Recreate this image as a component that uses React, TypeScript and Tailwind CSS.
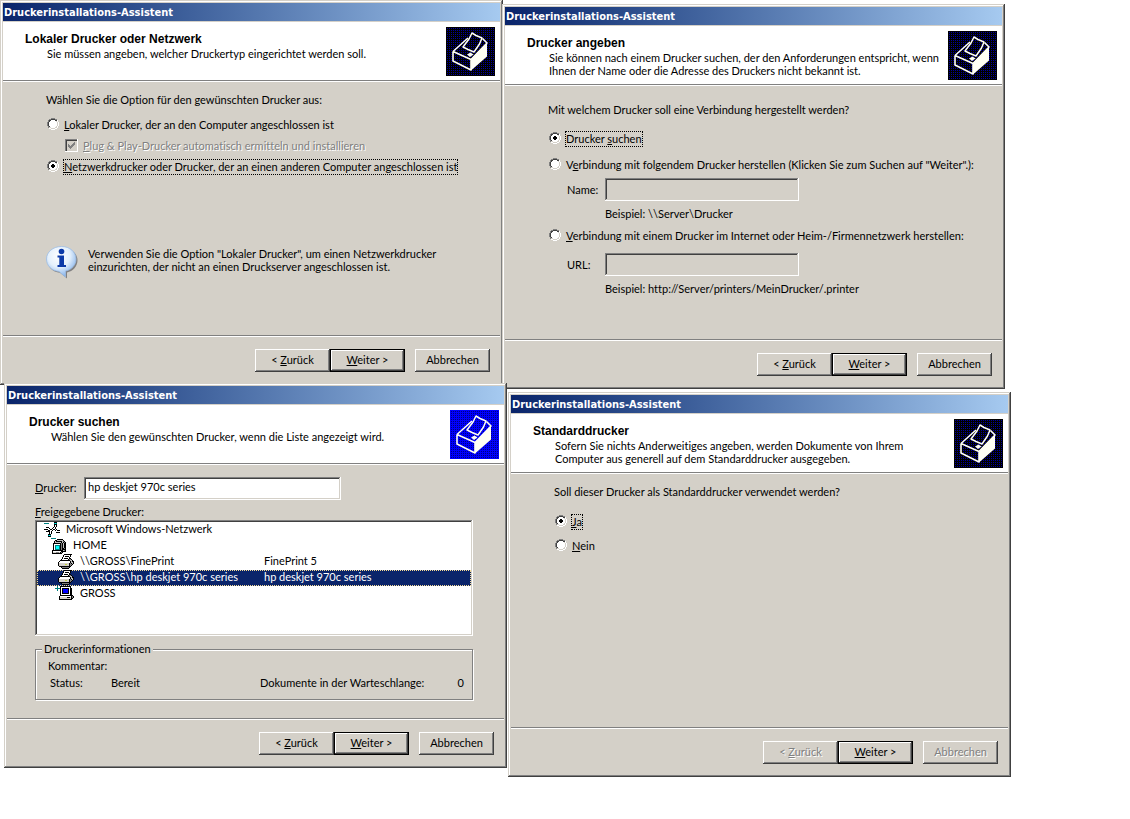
import React, { type ReactNode } from "react";

const PALETTE: Record<string, string> = {
  k: "#000000",
  d: "#404040",
  g: "#808080",
  s: "#c0c0c0",
  l: "#d4d0c8",
  w: "#ffffff",
  t: "#008080",
  c: "#00ffff",
  b: "#0000ff",
  y: "#c0d040",
};

function PixelIcon({ rows, className = "" }: { rows: string[]; className?: string }) {
  const width = rows[0].length;
  return (
    <svg
      width={width}
      height={rows.length}
      viewBox={`0 0 ${width} ${rows.length}`}
      shapeRendering="crispEdges"
      aria-hidden="true"
      className={className}
    >
      {rows.flatMap((row, y) =>
        [...row].map((cell, x) =>
          PALETTE[cell] ? <rect key={`${x}-${y}`} x={x} y={y} width="1" height="1" fill={PALETTE[cell]} /> : null
        )
      )}
    </svg>
  );
}

const RADIO = [
  "....gggg....",
  "..ggddddgg..",
  ".gddwwwwddw.",
  ".gdwwwwwwlw.",
  "gdwwwwwwwwlw",
  "gdwwwwwwwwlw",
  "gdwwwwwwwwlw",
  "gdwwwwwwwwlw",
  ".gdwwwwwwlw.",
  ".gllwwwwllw.",
  "..wwllllww..",
  "....wwww....",
];

const RADIO_DOT = [
  "............",
  "............",
  "............",
  "............",
  ".....kk.....",
  "....kkkk....",
  "....kkkk....",
  ".....kk.....",
  "............",
  "............",
  "............",
  "............",
];

const CHECK = [
  "......g",
  ".....gg",
  "g...ggg",
  "gg.ggg.",
  "ggggg..",
  ".ggg...",
  "..g....",
];

const NETWORK = [
  "..........kkk...",
  "ttttt.....tct...",
  "..........kkk...",
  "..........kwk...",
  "..........kwk...",
  "..kkk....kwk....",
  "wwwwwk..kwwk....",
  "kkkkwwkkwkkwk...",
  "..wwkkwwk..kwkkk",
  "..kkkkwk....wwww",
  ".....kwk....kkkk",
  ".....kwk........",
  "....kkk.........",
  "....tct.........",
  "....kkk.........",
];

const HOME = [
  "ttttt...........",
  "......kkkkkk....",
  "....kkssssssk...",
  "...kskkkkkksgk..",
  "...ksssssskskgk.",
  "..kkkkkkkkgkskk.",
  "..kwwwwwwkgkskk.",
  "..kwtttttkgkskk.",
  "..kwtccctkgkskk.",
  "..kwtccctkgkskk.",
  "..kwtccctkgkkgk.",
  "..kwtttttkgkkkk.",
  ".kkkkkkkkkkksgk.",
  ".kwwwwwwwwkkkkk.",
  ".klllggglkgk....",
  ".kkkkkkkkkk.....",
];

const PRINTER = [
  "......kkkkkkkk..",
  ".....kwwwwwwk...",
  ".....kwkkkkwk...",
  "....kwwwwwwk....",
  "....kwkkkkwkk...",
  "...kwwwwwwkggk..",
  "..kkkkkkkkkkssk.",
  ".kwwwwwwwwwwkskk",
  "kwwwwwwwwwwwkssk",
  "kllllllllllkgksk",
  "kllllllyyllkggk.",
  "kllllllllllkgk..",
  ".kkkkkkkkkkkk...",
  "...kgggggggk....",
  "....kkkkkkk.....",
];

const COMPUTER = [
  "..kkkkkkkkkkk...",
  "..kwwwwwwwwwk...",
  "..kwkkkkkkkwkk..",
  "..kwkbbbbbkwkk..",
  "..kwkbbbbbkwkk..",
  "..kwkbbbbbkwkk..",
  "..kwkbbbbbkwkk..",
  "..kwkkkkkkkwkk..",
  "..kwwwwwwwwwkk..",
  "..kkkkkkkkkkkkk.",
  ".kwwwwwwwwwwwkgk",
  ".klllllllkkklkgk",
  ".klllllllllllkk.",
  ".kkkkkkkkkkkkk..",
];

const PLUS = ["..t..", "..t..", "ttttt", "..t..", "..t.."];

function WizardPrinter({ bright }: { bright?: boolean }) {
  const id = bright ? "dither-bright" : "dither-dark";
  return (
    <svg width="49" height="49" viewBox="0 0 49 49" aria-hidden="true" className="shrink-0">
      <defs>
        <pattern id={id} width="2" height="2" patternUnits="userSpaceOnUse">
          <rect width="2" height="2" fill={bright ? "#0000ff" : "#000000"} />
          <rect x="1" y="1" width="1" height="1" fill={bright ? "#000080" : "#0000a0"} />
        </pattern>
      </defs>
      <rect width="49" height="49" fill={`url(#${id})`} />
      <path
        d="M7 24.5 L22 11 M7 24.5 L25 32.5 L41 16 L36.500 11.500 M7 24.500 V34 L25 43 V32.500"
        fill="none"
        stroke="#fffff4"
        strokeWidth="1.600"
        strokeLinejoin="round"
      />
      <path d="M25 32.5 L41 16 V29.500 L25 43.500 Z" fill="#fffff4" />
      <path
        d="M26 6 L30 8.500 L36 11 L33.500 17 L28 25 L22 22.500 L17 20 L23 12 Z"
        fill={`url(#${id})`}
        stroke="#fffff4"
        strokeWidth="1.500"
        strokeLinejoin="round"
      />
      <path d="M21 27.500 L24.500 25.500 L27.500 27.500 L24 30 Z" fill="#fffff4" />
    </svg>
  );
}

function InfoBalloon() {
  return (
    <svg width="32" height="33" viewBox="0 0 32 33" aria-hidden="true" className="shrink-0">
      <defs>
        <radialGradient id="balloon" cx="0.42" cy="0.3" r="0.75">
          <stop offset="0" stopColor="#ffffff" />
          <stop offset="0.5" stopColor="#e4f0fc" />
          <stop offset="1" stopColor="#76a8e8" />
        </radialGradient>
      </defs>
      <path
        d="M16.500 2 C25 2 31.500 7.300 31.500 14.200 C31.500 20.300 27 25.100 21 26.500 L21 32.500 L14 26.800 C6.500 26 1.500 20.800 1.500 14.200 C1.500 7.300 8 2 16.500 2 Z"
        fill="#66666a"
        opacity="0.75"
      />
      <path
        d="M15.500 .5 C24 .5 30 6 30 13 C30 19 25.500 23.800 19.500 25 L19.500 31 L13 25.400 C5.500 24.800 .5 19.600 .5 13 C.5 6 7 .5 15.500 .5 Z"
        fill="url(#balloon)"
        stroke="#9cbce4"
        strokeWidth="0.8"
      />
      <circle cx="15.500" cy="5.500" r="2.800" fill="#0c3aa8" />
      <path d="M11.500 9.500 H18 V19 H20 V21 H11.500 V19 H13.300 V11.500 H11.500 Z" fill="#0c3aa8" />
    </svg>
  );
}

function Radio({
  name,
  checked,
  focused,
  children,
}: {
  name: string;
  checked?: boolean;
  focused?: boolean;
  children: ReactNode;
}) {
  return (
    <label className="flex h-4 items-start gap-1 pl-px whitespace-nowrap">
      <span className="relative mt-px size-3 shrink-0">
        <input type="radio" name={name} defaultChecked={checked} className="peer block size-3 appearance-none" />
        <PixelIcon rows={RADIO} className="pointer-events-none absolute inset-0" />
        <PixelIcon rows={RADIO_DOT} className="pointer-events-none absolute inset-0 hidden peer-checked:block" />
      </span>
      <span className={`border border-dotted leading-[14px] ${focused ? "border-black" : "border-transparent"}`}>
        {children}
      </span>
    </label>
  );
}

function WizardButton({
  primary,
  disabled,
  children,
}: {
  primary?: boolean;
  disabled?: boolean;
  children: ReactNode;
}) {
  return (
    <button
      type="button"
      disabled={disabled}
      className={`h-[23px] w-[75px] bg-[#d4d0c8] text-center shadow-[inset_-1px_-1px_#404040,inset_1px_1px_#ffffff,inset_-2px_-2px_#808080] ${
        primary ? "border border-black" : ""
      } ${disabled ? "text-[#808080] [text-shadow:1px_1px_#ffffff]" : ""}`}
    >
      {children}
    </button>
  );
}

function Wizard({
  place,
  title,
  subtitle,
  bright,
  busy,
  children,
}: {
  place: string;
  title: string;
  subtitle: ReactNode;
  bright?: boolean;
  busy?: boolean;
  children: ReactNode;
}) {
  return (
    <section
      className={`absolute flex w-[503px] flex-col bg-[#d4d0c8] p-[3px] shadow-[inset_-1px_-1px_#404040,inset_1px_1px_#d4d0c8,inset_-2px_-2px_#808080,inset_2px_2px_#ffffff] ${place}`}
    >
      <h1 className="mb-px h-[18px] bg-linear-to-r from-[#0a246a] to-[#a6caf0] px-px font-['DejaVu_Sans_Condensed','DejaVu_Sans',sans-serif] text-[11px] leading-5 font-bold text-white">
        Druckerinstallations-Assistent
      </h1>
      <header className="flex h-[60px] items-start justify-between border-b border-white bg-white pt-[5px] pr-[5px] pl-[22px] shadow-[inset_0_-1px_#808080]">
        <div className="pt-1">
          <h2 className="font-['Liberation_Sans',Arial,sans-serif] text-xs leading-4 font-bold">{title}</h2>
          <p className="pl-[22px] leading-[13px]">{subtitle}</p>
        </div>
        <WizardPrinter bright={bright} />
      </header>
      <div className="min-h-[253px]">{children}</div>
      <footer className="flex justify-end border-t border-[#808080] pt-[13px] pr-2.5 pb-2.5 shadow-[inset_0_1px_#ffffff]">
        <WizardButton disabled={busy}>
          &lt; <u>Z</u>urück
        </WizardButton>
        <WizardButton primary>
          <u>W</u>eiter &gt;
        </WizardButton>
        <span className="w-2.5" />
        <WizardButton disabled={busy}>Abbrechen</WizardButton>
      </footer>
    </section>
  );
}

function AddressField({ id, label, example }: { id: string; label: string; example: string }) {
  return (
    <div className="grid grid-cols-[38px_194px] gap-y-[5px] pl-[19px]">
      <label htmlFor={id} className="self-center leading-4">
        {label}
      </label>
      <input
        id={id}
        type="text"
        disabled
        className="h-[23px] bg-[#d4d0c8] px-1 shadow-[inset_-1px_-1px_#ffffff,inset_1px_1px_#808080,inset_-2px_-2px_#d4d0c8,inset_2px_2px_#404040]"
      />
      <p className="col-start-2 leading-4 whitespace-nowrap">{example}</p>
    </div>
  );
}

const TREE = [
  { icon: NETWORK, pad: "pl-[7px]", label: "Microsoft Windows-Netzwerk", info: "" },
  { icon: HOME, pad: "pl-[14px]", label: "HOME", info: "" },
  { icon: PRINTER, pad: "pl-[21px]", label: "\\\\GROSS\\FinePrint", info: "FinePrint 5" },
  {
    icon: PRINTER,
    pad: "pl-[21px]",
    label: "\\\\GROSS\\hp deskjet 970c series",
    info: "hp deskjet 970c series",
    selected: true,
  },
  { icon: COMPUTER, pad: "pl-[21px]", label: "GROSS", info: "", closed: true },
];

export default function App() {
  return (
    <main className="relative min-h-screen overflow-hidden bg-white font-[Lato,'Liberation_Sans',sans-serif] text-[11px] text-black [font-variant-ligatures:none]">
      <Wizard
        place="top-0 left-0"
        title="Lokaler Drucker oder Netzwerk"
        subtitle="Sie müssen angeben, welcher Druckertyp eingerichtet werden soll."
      >
        <div className="pt-2.5 pl-[43px]">
          <p className="mb-[9px] leading-4">Wählen Sie die Option für den gewünschten Drucker aus:</p>
          <div className="flex flex-col gap-[5px]">
            <Radio name="kind">
              <u>L</u>okaler Drucker, der an den Computer angeschlossen ist
            </Radio>
            <label className="flex h-4 items-start gap-1 pl-[19px] text-[#808080] [text-shadow:1px_1px_#ffffff]">
              <span className="relative mt-px size-[13px] shrink-0">
                <input
                  type="checkbox"
                  defaultChecked
                  disabled
                  className="block size-[13px] appearance-none shadow-[inset_-1px_-1px_#ffffff,inset_1px_1px_#808080,inset_2px_2px_#404040]"
                />
                <PixelIcon rows={CHECK} className="pointer-events-none absolute top-[3px] left-[3px]" />
              </span>
              <span className="border border-transparent leading-[14px]">
                <u>P</u>lug &amp; Play-Drucker automatisch ermitteln und installieren
              </span>
            </label>
            <Radio name="kind" checked focused>
              <u>N</u>etzwerkdrucker oder Drucker, der an einen anderen Computer angeschlossen ist
            </Radio>
          </div>
          <div className="mt-[71px] flex gap-2.5">
            <InfoBalloon />
            <p className="pt-px leading-[13px]">
              Verwenden Sie die Option "Lokaler Drucker", um einen Netzwerkdrucker
              <br />
              einzurichten, der nicht an einen Druckserver angeschlossen ist.
            </p>
          </div>
        </div>
      </Wizard>

      <Wizard
        place="top-1 left-[502px]"
        title="Drucker angeben"
        subtitle={
          <>
            Sie können nach einem Drucker suchen, der den Anforderungen entspricht, wenn
            <br />
            Ihnen der Name oder die Adresse des Druckers nicht bekannt ist.
          </>
        }
      >
        <div className="flex flex-col pt-4 pl-[43px]">
          <p className="mb-[13px] leading-4">Mit welchem Drucker soll eine Verbindung hergestellt werden?</p>
          <Radio name="target" checked focused>
            Drucker <u>s</u>uchen
          </Radio>
          <div className="mt-2.5 mb-[5px]">
            <Radio name="target">
              V<u>e</u>rbindung mit folgendem Drucker herstellen (Klicken Sie zum Suchen auf "Weiter".):
            </Radio>
          </div>
          <AddressField id="printer-name" label="Name:" example="Beispiel: \\Server\Drucker" />
          <div className="mt-1.5 mb-[9px]">
            <Radio name="target">
              <u>V</u>erbindung mit einem Drucker im Internet oder Heim-/Firmennetzwerk herstellen:
            </Radio>
          </div>
          <AddressField id="printer-url" label="URL:" example="Beispiel: http://Server/printers/MeinDrucker/.printer" />
        </div>
      </Wizard>

      <Wizard
        place="top-[383px] left-1"
        title="Drucker suchen"
        subtitle="Wählen Sie den gewünschten Drucker, wenn die Liste angezeigt wird."
        bright
      >
        <div className="pt-3 pr-[31px] pl-7">
          <div className="flex items-center">
            <label htmlFor="printer" className="w-[49px]">
              <u>D</u>rucker:
            </label>
            <input
              id="printer"
              type="text"
              defaultValue="hp deskjet 970c series"
              className="h-[23px] w-[257px] bg-white px-1 pb-1 shadow-[inset_-1px_-1px_#ffffff,inset_1px_1px_#808080,inset_-2px_-2px_#d4d0c8,inset_2px_2px_#404040]"
            />
          </div>
          <p id="shared" className="mt-1 leading-4">
            <u>F</u>reigegebene Drucker:
          </p>
          <ul
            role="tree"
            aria-labelledby="shared"
            className="h-[116px] bg-white p-0.5 shadow-[inset_-1px_-1px_#ffffff,inset_1px_1px_#808080,inset_-2px_-2px_#d4d0c8,inset_2px_2px_#404040]"
          >
            {TREE.map((row) => (
              <li
                key={row.label}
                role="treeitem"
                aria-selected={!!row.selected}
                className={`grid h-4 grid-cols-[227px_1fr] leading-[14px] ${
                  row.selected
                    ? "bg-[#0a246a] text-white outline-1 -outline-offset-1 outline-[#f5db95] outline-dotted"
                    : ""
                }`}
              >
                <span className={`relative flex items-start gap-1.5 whitespace-nowrap ${row.pad}`}>
                  <PixelIcon rows={row.icon} className="shrink-0" />
                  {row.closed && <PixelIcon rows={PLUS} className="absolute top-0 left-[18px]" />}
                  {row.label}
                </span>
                <span>{row.info}</span>
              </li>
            ))}
          </ul>
          <fieldset className="mt-[5px] border border-[#808080] pb-2 shadow-[inset_1px_1px_#ffffff,1px_1px_#ffffff]">
            <legend className="ml-1.5 bg-[#d4d0c8] px-0.5 leading-4">Druckerinformationen</legend>
            <p className="pt-px pl-3 leading-4">Kommentar:</p>
            <dl className="mt-px grid grid-cols-[61px_149px_1fr_auto] pr-2 pl-3.5 leading-4">
              <dt>Status:</dt>
              <dd>Bereit</dd>
              <dt>Dokumente in der Warteschlange:</dt>
              <dd>0</dd>
            </dl>
          </fieldset>
        </div>
      </Wizard>

      <Wizard
        place="top-[392px] left-[508px]"
        title="Standarddrucker"
        subtitle={
          <>
            Sofern Sie nichts Anderweitiges angeben, werden Dokumente von Ihrem
            <br />
            Computer aus generell auf dem Standarddrucker ausgegeben.
          </>
        }
        busy
      >
        <div className="pt-2.5 pl-[43px]">
          <p className="mb-3.5 leading-4">Soll dieser Drucker als Standarddrucker verwendet werden?</p>
          <div className="flex flex-col gap-2">
            <Radio name="default" checked focused>
              <u>J</u>a
            </Radio>
            <Radio name="default">
              <u>N</u>ein
            </Radio>
          </div>
        </div>
      </Wizard>
    </main>
  );
}
